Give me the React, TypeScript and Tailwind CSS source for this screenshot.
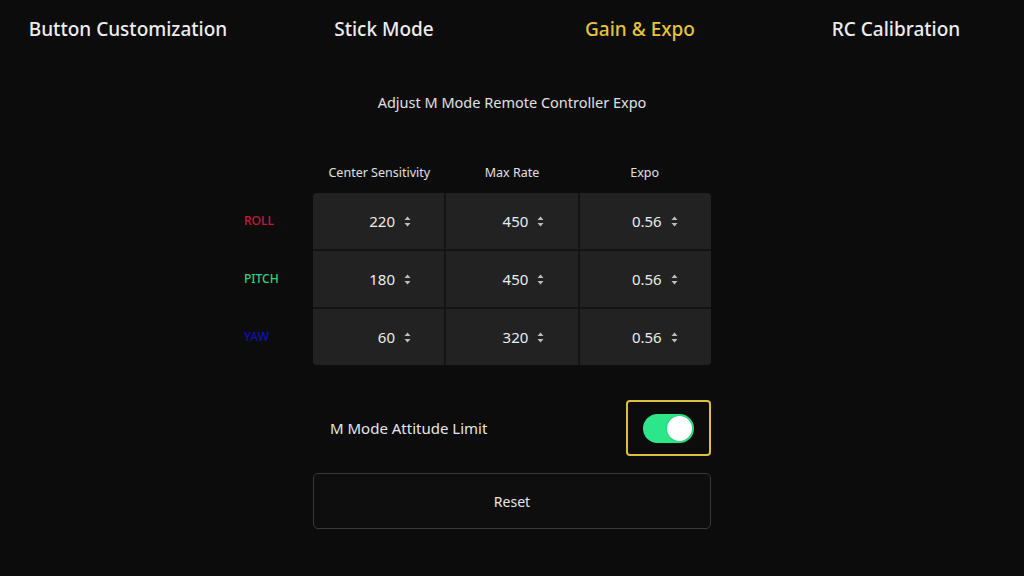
import React from 'react';

const tabs = ['Button Customization', 'Stick Mode', 'Gain & Expo', 'RC Calibration'];

const rows = [
  { label: 'ROLL', color: 'text-[#c8183a]', values: ['220', '450', '0.56'] },
  { label: 'PITCH', color: 'text-[#34d17c]', values: ['180', '450', '0.56'] },
  { label: 'YAW', color: 'text-[#1010b8]', values: ['60', '320', '0.56'] },
];

const Stepper: React.FC = () => (
  <svg width="7" height="11" viewBox="0 0 7 11" className="ml-[9px]">
    <path d="M3.5 0.5 L6.5 4 L0.5 4 Z" fill="#bdbdbd" />
    <path d="M3.5 10.5 L6.5 7 L0.5 7 Z" fill="#bdbdbd" />
  </svg>
);

const App: React.FC = () => {
  return (
    <div className="w-[1024px] h-[576px] bg-[#0c0c0c] text-[#e8e8e8] font-['Noto_Sans',sans-serif] overflow-hidden">
      {/* tabs */}
      <div className="grid grid-cols-4 h-[58px] items-center text-center text-[19px] font-medium">
        {tabs.map((t) => (
          <div key={t} className={t === 'Gain & Expo' ? 'text-[#e3c43c]' : 'text-[#ededed]'}>
            {t}
          </div>
        ))}
      </div>

      <div className="mt-[34px] text-center text-[14.5px] leading-[20px] text-[#e0e0e0]">
        Adjust M Mode Remote Controller Expo
      </div>

      <div className="ml-[244px] w-[467px]">
        {/* column headers */}
        <div className="mt-[53px] flex text-[12.5px] leading-[16px] text-[#e0e0e0]">
          <div className="w-[69px]" />
          <div className="flex-1 grid grid-cols-3 text-center">
            <div>Center Sensitivity</div>
            <div>Max Rate</div>
            <div>Expo</div>
          </div>
        </div>

        {/* table */}
        <div className="mt-[12px] flex">
          <div className="w-[69px] flex flex-col gap-[2px]">
            {rows.map((r) => (
              <div key={r.label} className={`h-[56px] flex items-center text-[12px] font-medium ${r.color}`}>
                {r.label}
              </div>
            ))}
          </div>
          <div className="flex-1 grid grid-cols-3 gap-[2px] bg-[#141414] rounded-[4px] overflow-hidden">
            {rows.flatMap((r) =>
              r.values.map((v, i) => (
                <div key={r.label + i} className="h-[56px] bg-[#222222] flex items-center pl-[22px]">
                  <span className="w-[60px] text-right text-[15px] text-[#ececec]">{v}</span>
                  <Stepper />
                </div>
              ))
            )}
          </div>
        </div>
      </div>

      <div className="ml-[313px] w-[398px]">
        {/* attitude limit toggle */}
        <div className="mt-[35px] flex items-center justify-between">
          <div className="pl-[17px] text-[15px] text-[#e6e6e6]">M Mode Attitude Limit</div>
          <div className="w-[85px] h-[56px] border-2 border-[#dcbf3c] rounded-[4px] flex items-center justify-center">
            <div className="w-[51px] h-[29px] rounded-full bg-[#2de68a] flex items-center justify-end pr-[2px]">
              <div className="w-[25px] h-[25px] rounded-full bg-white shadow-[0_0_2px_rgba(0,0,0,0.3)]" />
            </div>
          </div>
        </div>

        <button className="mt-[17px] w-full h-[56px] border border-[#3a3a3a] rounded-[5px] bg-[#0e0e0e] text-[14px] text-[#e6e6e6]">
          Reset
        </button>
      </div>
    </div>
  );
};

export default App;
